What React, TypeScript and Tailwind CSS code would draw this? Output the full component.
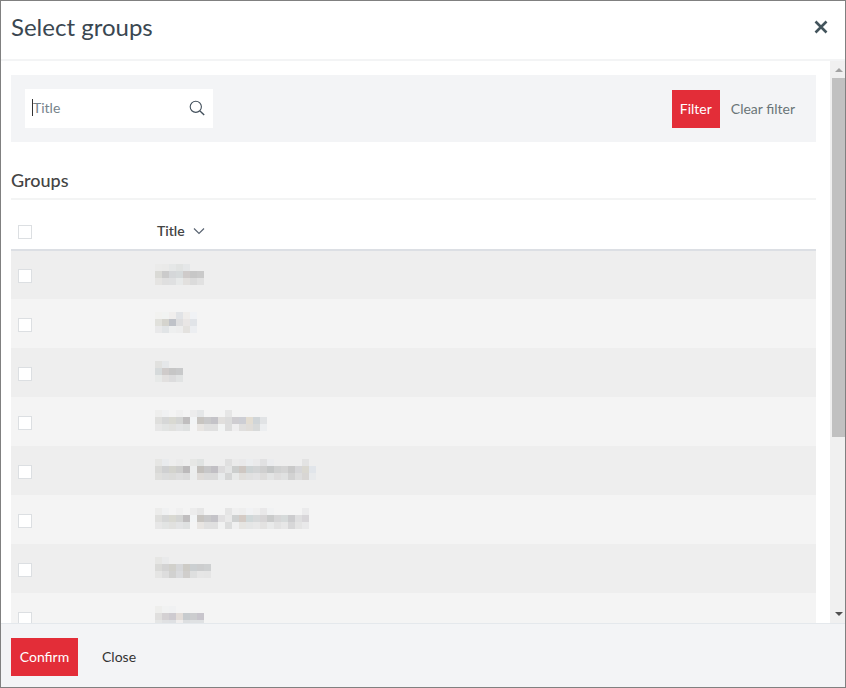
import React, { useMemo, useState } from 'react';

interface Group {
  id: string;
  cells: string[][];
}

const parse = (...rows: string[]) => rows.map((row) => row.split(' '));

const CELL = 7;

// Group titles are masked; each row lists the mask's cell colours, "-" leaves a gap.
const groups: Group[] = [
  {
    id: 'group-1',
    cells: parse(
      'ebebea eaeae9 e5e7e7 e1e3e2 e5e7e8',
      'dadad6 cbcbcb d5d7d9 d6dadb cfcbca c7c7c7 cacaca',
      'e5e4e2 dfdfdf dfe0e1 e7e9e9 e2e0de dbdbdb e1e1e1',
    ),
  },
  {
    id: 'group-2',
    cells: parse(
      'f2f2f0 f1f3f2 f0eeed e1e3e6 efedeb f0f2f5',
      'e1e1dc d5d4ce bfc2c8 dededf e9e6e5 e1e4e8',
      'e9e9ea e1e4e6 eeefef ededed e4e2df eceef1',
    ),
  },
  {
    id: 'group-3',
    cells: parse('e1e1df e5e7e9', 'd6dadb cfcbca c6c6c6 c8c9ca', 'e7e9e8 e2e0df dcdcdd e1e3e3'),
  },
  {
    id: 'group-4',
    cells: parse(
      'eeeeed f0f1f2 - f0f0f0 - ececec e5e7e8 - - - e6e6e6',
      'dfdfdd d6d7d7 d9d9d2 d4d5d4 c0bebf f2f4f5 c8c5c1 c9c9ca c4c3c8 e1dfdd dcdcdc cfcdd1 cdced4 e3ddd2 d0d5d8 e1e3e5',
      'e7e7e7 e2e4e3 e1e1df e3e4e5 dfe1e1 - e8e5e2 e0e0e0 e0e0e0 f2f4f4 dddddd efeeef e0dfde e0ddd9 d8dada eceef0',
    ),
  },
  {
    id: 'group-5',
    cells: parse(
      'e6e6e4 e9ebed - ebebeb - e6e7e5 e0e3e2 - - - e0e0e0 ebebeb e9e9ea ebedef eaeaeb e1e1e2 ebecee - - - - e3e3e3',
      'd9d9d7 cfd0d1 d3d3cd cececd bcbabb eceeee c3c0bc c7c7c8 c1bfc4 dcdbdc e4e5e5 cccecd cec7c2 cdd3d4 d2d4d5 cfcfcf c5c7c7 d0d1d1 d4d4d4 c9c9c9 d6d6d8 dad8d1 e1e5ea',
      'dfdfdd dbdcdc dbdbd9 dedede dbdbdb ebeded dedbd8 dadada dadada e8eaeb d5d6d6 e8e9e8 e0dedb e0e0e0 e2e2e3 dddcdb e3e4e4 dedddd e0e1e1 d2d2d2 dddddd d8d6d4 e8eaec',
    ),
  },
  {
    id: 'group-6',
    cells: parse(
      'ececeb f0f1f2 - f0f0f0 - ececec e6e6e6 - - - e5e5e5 f0f0f0 eeeeee f1f2f4 f0f0f0 e9e8e9 f1f2f3 - - - - ebebec',
      'dfdfdd d6d7d7 d9d9d2 d4d5d4 c0bebf f2f4f5 c8c5c1 c9c9ca c4c3c8 e1e0e1 e9e9e9 cfd1d1 d4cbc5 d0d8d9 d7d9da d7d5d6 cacbcb d6d6d7 d6dada ccccce dfdfe0 d8d6d9',
      'e7e7e7 e2e4e3 e1e1df e3e4e5 dfe1e1 - e8e5e2 e0e0e0 e0e0e0 f1f2f2 dcdddd f0f0f0 e6e5e2 e5e6e6 e8e8e8 e3e2e1 e9eaea e2e2e2 e7e7e7 d7d7d8 e4e4e4 e9e9ea',
    ),
  },
  {
    id: 'group-7',
    cells: parse(
      'e6e6e4 e9eaeb',
      'dadad8 d3d3d3 d1d0cb d6d7d9 cdcbc6 cbcfd1 cccdce ced0d1',
      'e5e5e4 dddddd d1d1d0 dadbdd d0cecc dedfdf e6e6e6 e5e5e5',
    ),
  },
  {
    id: 'group-8',
    cells: parse(
      'eeeeec f1f2f2 f0f1f2',
      'e0dfde d4d1d3 cecbd0 e3ddd9 c7cbce cccdcf c8c5cc',
      'e5e6e6 e0e1e3 dee0e3 f0eeee dddfe1 dfe1e3 dfe1e3',
    ),
  },
];

const checkboxClass =
  'block size-3.5 appearance-none border border-[#dcdfe2] bg-white checked:border-[#e32d38] checked:bg-[#e32d38]';

const MaskedTitle: React.FC<{ cells: string[][] }> = ({ cells }) => {
  const width = Math.max(...cells.map((row) => row.length)) * CELL;
  return (
    <svg width={width} height={cells.length * CELL} className="block" shapeRendering="crispEdges" aria-hidden="true">
      {cells.map((row, y) =>
        row.map((fill, x) =>
          fill === '-' ? null : (
            <rect key={`${x}-${y}`} x={x * CELL} y={y * CELL} width={CELL} height={CELL} fill={`#${fill}`} />
          ),
        ),
      )}
    </svg>
  );
};

const App: React.FC = () => {
  const [title, setTitle] = useState('');
  const [selected, setSelected] = useState<string[]>([]);

  const allSelected = useMemo(() => selected.length === groups.length, [selected]);

  const toggle = (id: string) => {
    setSelected((current) => (current.includes(id) ? current.filter((item) => item !== id) : [...current, id]));
  };

  return (
    <div
      role="dialog"
      aria-labelledby="dialog-title"
      className="flex h-screen flex-col border border-[#808080] bg-white font-[Lato,sans-serif] text-sm text-[#444]"
    >
      <header className="flex h-15 shrink-0 items-center justify-between border-b-2 border-[#f3f4f5] pr-4 pb-1.5 pl-2.5">
        <h1 id="dialog-title" className="text-2xl font-normal text-[#3a4751]">
          Select groups
        </h1>
        <button type="button" aria-label="Close dialog" className="text-[#43545c]">
          <svg viewBox="0 0 16 16" className="size-4" fill="none" stroke="currentColor" strokeWidth="2.6">
            <path d="M2.5 2.5 13.5 13.5M13.5 2.5 2.5 13.5" />
          </svg>
        </button>
      </header>

      <div className="flex min-h-0 flex-1">
        <main className="min-w-0 flex-1 overflow-y-auto pt-3.5 pr-3.5 pl-2.5 [scrollbar-width:none]">
          <form
            className="flex items-center justify-between bg-[#f3f4f6] py-3.5 pr-[21px] pl-3.5"
            onSubmit={(e) => e.preventDefault()}
          >
            <div className="flex h-[39px] w-47 items-center bg-white pr-2 pb-0.5 pl-[7px]">
              <span className="h-[17px] w-px bg-[#333]" />
              <input
                type="text"
                aria-label="Title"
                placeholder="Title"
                value={title}
                onChange={(e) => setTitle(e.target.value)}
                className="min-w-0 flex-1 outline-none placeholder:text-[#76838b]"
              />
              <button type="submit" aria-label="Search" className="text-[#43505c]">
                <svg viewBox="0 0 16 16" className="size-4" fill="none" stroke="currentColor" strokeWidth="1.1">
                  <circle cx="6.8" cy="6.8" r="5.6" />
                  <path d="m11 11 4.2 4" strokeWidth="1.4" />
                </svg>
              </button>
            </div>
            <div className="flex items-center gap-[11px]">
              <button type="submit" className="h-[38px] w-12 bg-[#e32d38] text-white">
                Filter
              </button>
              <button type="button" onClick={() => setTitle('')} className="text-[#6a7478]">
                Clear filter
              </button>
            </div>
          </form>

          <h2 className="mt-6 border-b-2 border-[#f3f4f4] pb-1 text-lg leading-7 font-medium text-[#444]">Groups</h2>

          <table className="w-full table-fixed border-collapse text-left">
            <thead>
              <tr className="h-[50px] border-b-2 border-[#dcdfe4]">
                <th className="w-36 pt-3.5 pl-[7px]">
                  <input
                    type="checkbox"
                    aria-label="Select all groups"
                    checked={allSelected}
                    onChange={() => setSelected(allSelected ? [] : groups.map((group) => group.id))}
                    className={checkboxClass}
                  />
                </th>
                <th className="pt-3 pl-0.5">
                  <button type="button" className="flex items-center gap-2 font-semibold">
                    Title
                    <svg viewBox="0 0 12 8" className="h-2 w-3" fill="none" stroke="#5a6472" strokeWidth="1.2">
                      <path d="m1 1.5 5 5 5-5" />
                    </svg>
                  </button>
                </th>
              </tr>
            </thead>
            <tbody>
              {groups.map((group, index) => (
                <tr key={group.id} className="h-[49px] odd:bg-[#eee] even:bg-[#f4f4f4]">
                  <td className="pt-0.5 pl-[7px]">
                    <input
                      type="checkbox"
                      aria-label={`Select group ${index + 1}`}
                      checked={selected.includes(group.id)}
                      onChange={() => toggle(group.id)}
                      className={checkboxClass}
                    />
                  </td>
                  <td className="pb-0.5">
                    <MaskedTitle cells={group.cells} />
                  </td>
                </tr>
              ))}
            </tbody>
          </table>
        </main>

        <div className="flex w-[15px] shrink-0 flex-col bg-[#f0f0f0] pl-0.5" aria-hidden="true">
          <div className="flex h-[17px] items-center justify-center">
            <svg viewBox="0 0 8 4" className="h-1 w-2 fill-[#a3a3a3]">
              <path d="M0 4 4 0 8 4Z" />
            </svg>
          </div>
          <div className="min-h-0 flex-1">
            <div className="h-[68%] bg-[#c1c1c1]" />
          </div>
          <div className="flex h-[17px] items-center justify-center pb-0.5">
            <svg viewBox="0 0 8 4" className="h-1 w-2 fill-[#505050]">
              <path d="M0 0 4 4 8 0Z" />
            </svg>
          </div>
        </div>
      </div>

      <footer className="flex h-16 shrink-0 items-center gap-6 border-t border-[#e4e8ec] bg-[#f3f4f6] pt-0.5 pl-2.5">
        <button type="button" className="h-[38px] w-[67px] bg-[#e32d38] text-white">
          Confirm
        </button>
        <button type="button" className="text-[#333]">
          Close
        </button>
      </footer>
    </div>
  );
};

export default App;
